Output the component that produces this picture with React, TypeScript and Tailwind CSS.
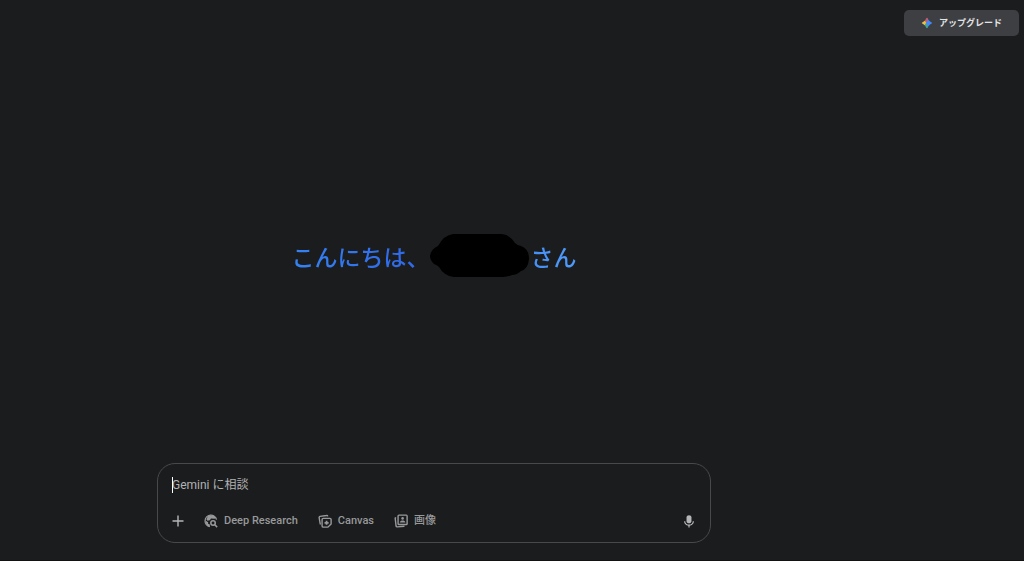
import type { ReactNode } from "react";

function Spark() {
  return (
    <svg className="size-3" viewBox="0 0 24 24" aria-hidden="true">
      <defs>
        <clipPath id="spark">
          <path d="M12 1c2.500 5 6 8.500 11 11-5 2.500-8.500 6-11 11-2.500-5-6-8.500-11-11 5-2.500 8.500-6 11-11z" />
        </clipPath>
        <filter id="blend" x="-20%" y="-20%" width="140%" height="140%">
          <feGaussianBlur stdDeviation="1.200" />
        </filter>
      </defs>
      <g clipPath="url(#spark)">
        <rect width="24" height="24" fill="#4389f5" />
        <g filter="url(#blend)">
          <path d="M5 0h10l-3 9-4 2z" fill="#e8504a" />
          <path d="M0 3l10 7-1 5-9 6z" fill="#f2c032" />
          <path d="M2 24l8-11 6 11z" fill="#3fae68" />
        </g>
      </g>
    </svg>
  );
}

function ResearchIcon() {
  return (
    <svg className="size-[14px]" viewBox="0 0 24 24" fill="none" stroke="currentColor" strokeWidth="2.200" aria-hidden="true">
      <path d="M21.500 9.500A10 10 0 1 0 10 21.800" />
      <path d="M2.500 11l4.500 3v2.500l3 1.500v4C5.500 21 2.500 17 2.500 11z" fill="currentColor" stroke="none" />
      <path d="M7 3L4 9l2 2.500 4-1 2-3 6 .500 3-1L17 3l-5-1z" fill="currentColor" stroke="none" />
      <circle cx="15.500" cy="15.500" r="3.800" strokeWidth="2.600" />
      <path d="M18.500 18.500l4 4" strokeWidth="2.600" />
    </svg>
  );
}

function CanvasIcon() {
  return (
    <svg className="size-[14px]" viewBox="0 0 24 24" fill="none" stroke="currentColor" strokeWidth="2.400" aria-hidden="true">
      <path d="M4 18L2 6.500a2 2 0 0 1 1.500-2.400L14.500 2.500a2 2 0 0 1 2.300 1.500" />
      <path d="M9 7.500h11.500a2 2 0 0 1 2 2V17l-5.500 5.500H9a2 2 0 0 1-2-2v-11a2 2 0 0 1 2-2z" />
      <path d="M14.700 11.500v7M11.200 15h7" strokeWidth="3" />
    </svg>
  );
}

function ImageIcon() {
  return (
    <svg className="size-[14px]" viewBox="0 0 24 24" fill="none" stroke="currentColor" strokeWidth="2.400" aria-hidden="true">
      <rect x="7" y="2" width="15.500" height="16" rx="1.500" />
      <path d="M3.500 6L2 7l1.500 13.500a2 2 0 0 0 2.200 1.500L18 21" />
      <circle cx="14.700" cy="7.500" r="2.200" fill="currentColor" stroke="none" />
      <path d="M10 14.500c1-4.500 8.500-4.500 9.500 0z" fill="currentColor" stroke="none" />
    </svg>
  );
}

function Tool({ icon, children }: { icon: ReactNode; children: ReactNode }) {
  return (
    <button type="button" className="flex items-center gap-1.5 text-[11px] leading-4 font-medium whitespace-nowrap text-[#97999b]">
      {icon}
      {children}
    </button>
  );
}

export default function App() {
  return (
    <div className="flex min-h-screen flex-col border-b border-[#111213] bg-[#1b1c1d] font-['Roboto','Noto_Sans_CJK_JP',sans-serif]">
      <header className="flex justify-end px-[5px] pt-[10px]">
        <button type="button" className="flex h-[26px] items-center gap-1.5 rounded-[5px] bg-[#3d3f42] px-[17px] font-['Noto_Sans_CJK_JP',sans-serif] text-[9px] leading-4 font-bold text-[#e3e4e6]">
          <Spark />
          アップグレード
        </button>
      </header>

      <main className="flex flex-1 flex-col items-center pr-[156px] pb-[17px]">
        <div className="flex flex-1 items-center pt-3">
          <h1 className="flex items-center bg-linear-to-r from-[#3583f3] via-[#3069e8] via-40% to-[#4f9bfa] bg-clip-text font-['Noto_Sans_CJK_JP',sans-serif] text-[23px] leading-8 font-medium text-transparent">
            <span>こんにちは、</span>
            <svg className="h-[43px] w-[99px]" viewBox="0 0 99 43" aria-hidden="true">
              <path
                d="M23 0H72Q80 1 85 9Q88 12 91 12Q99 15 99 25Q98 35 91 37Q87 41 82 41Q78 43 73 43H24Q14 42 9 33Q7 31 4 30Q0 26 0 22Q1 15 8 12Q14 1 23 0Z"
                fill="#000"
              />
            </svg>
            <span className="pl-0.5">さん</span>
          </h1>
        </div>

        <form className="flex w-full max-w-[554px] flex-col gap-5 rounded-[18px] border border-[#47494b] px-[14px] py-[13px]" onSubmit={(e) => e.preventDefault()}>
          <div className="relative flex">
            <span className="absolute top-0 left-0 h-4 w-px bg-white" />
            <input
              type="text"
              aria-label="Gemini に相談"
              placeholder="Gemini に相談"
              className="h-4 w-full bg-transparent text-[12px] text-[#e3e4e6] outline-none placeholder:text-[#b0b2b4]"
            />
          </div>
          <div className="flex h-4 items-center gap-5">
            <button type="button" aria-label="追加" className="text-[#b4b6b8]">
              <svg className="size-3" viewBox="0 0 12 12" stroke="currentColor" strokeWidth="1.400" aria-hidden="true">
                <path d="M6 .500v11M.500 6h11" />
              </svg>
            </button>
            <Tool icon={<ResearchIcon />}>Deep Research</Tool>
            <Tool icon={<CanvasIcon />}>Canvas</Tool>
            <Tool icon={<ImageIcon />}>画像</Tool>
            <button type="button" aria-label="マイク" className="ml-auto text-[#b4b6b8]">
              <svg className="h-[13px] w-[14px]" viewBox="3 1 18 21" fill="currentColor" aria-hidden="true">
                <path d="M12 14.500c2.200 0 4-1.500 4-3.500V5c0-2-1.800-3.500-4-3.500S8 3 8 5v6c0 2 1.800 3.500 4 3.500z" />
                <path d="M18 11c0 3.300-2.700 5.500-6 5.500S6 14.300 6 11H4c0 3.900 3 6.800 7 7.300V21h2v-2.700c4-.500 7-3.400 7-7.300z" />
              </svg>
            </button>
          </div>
        </form>
      </main>
    </div>
  );
}
